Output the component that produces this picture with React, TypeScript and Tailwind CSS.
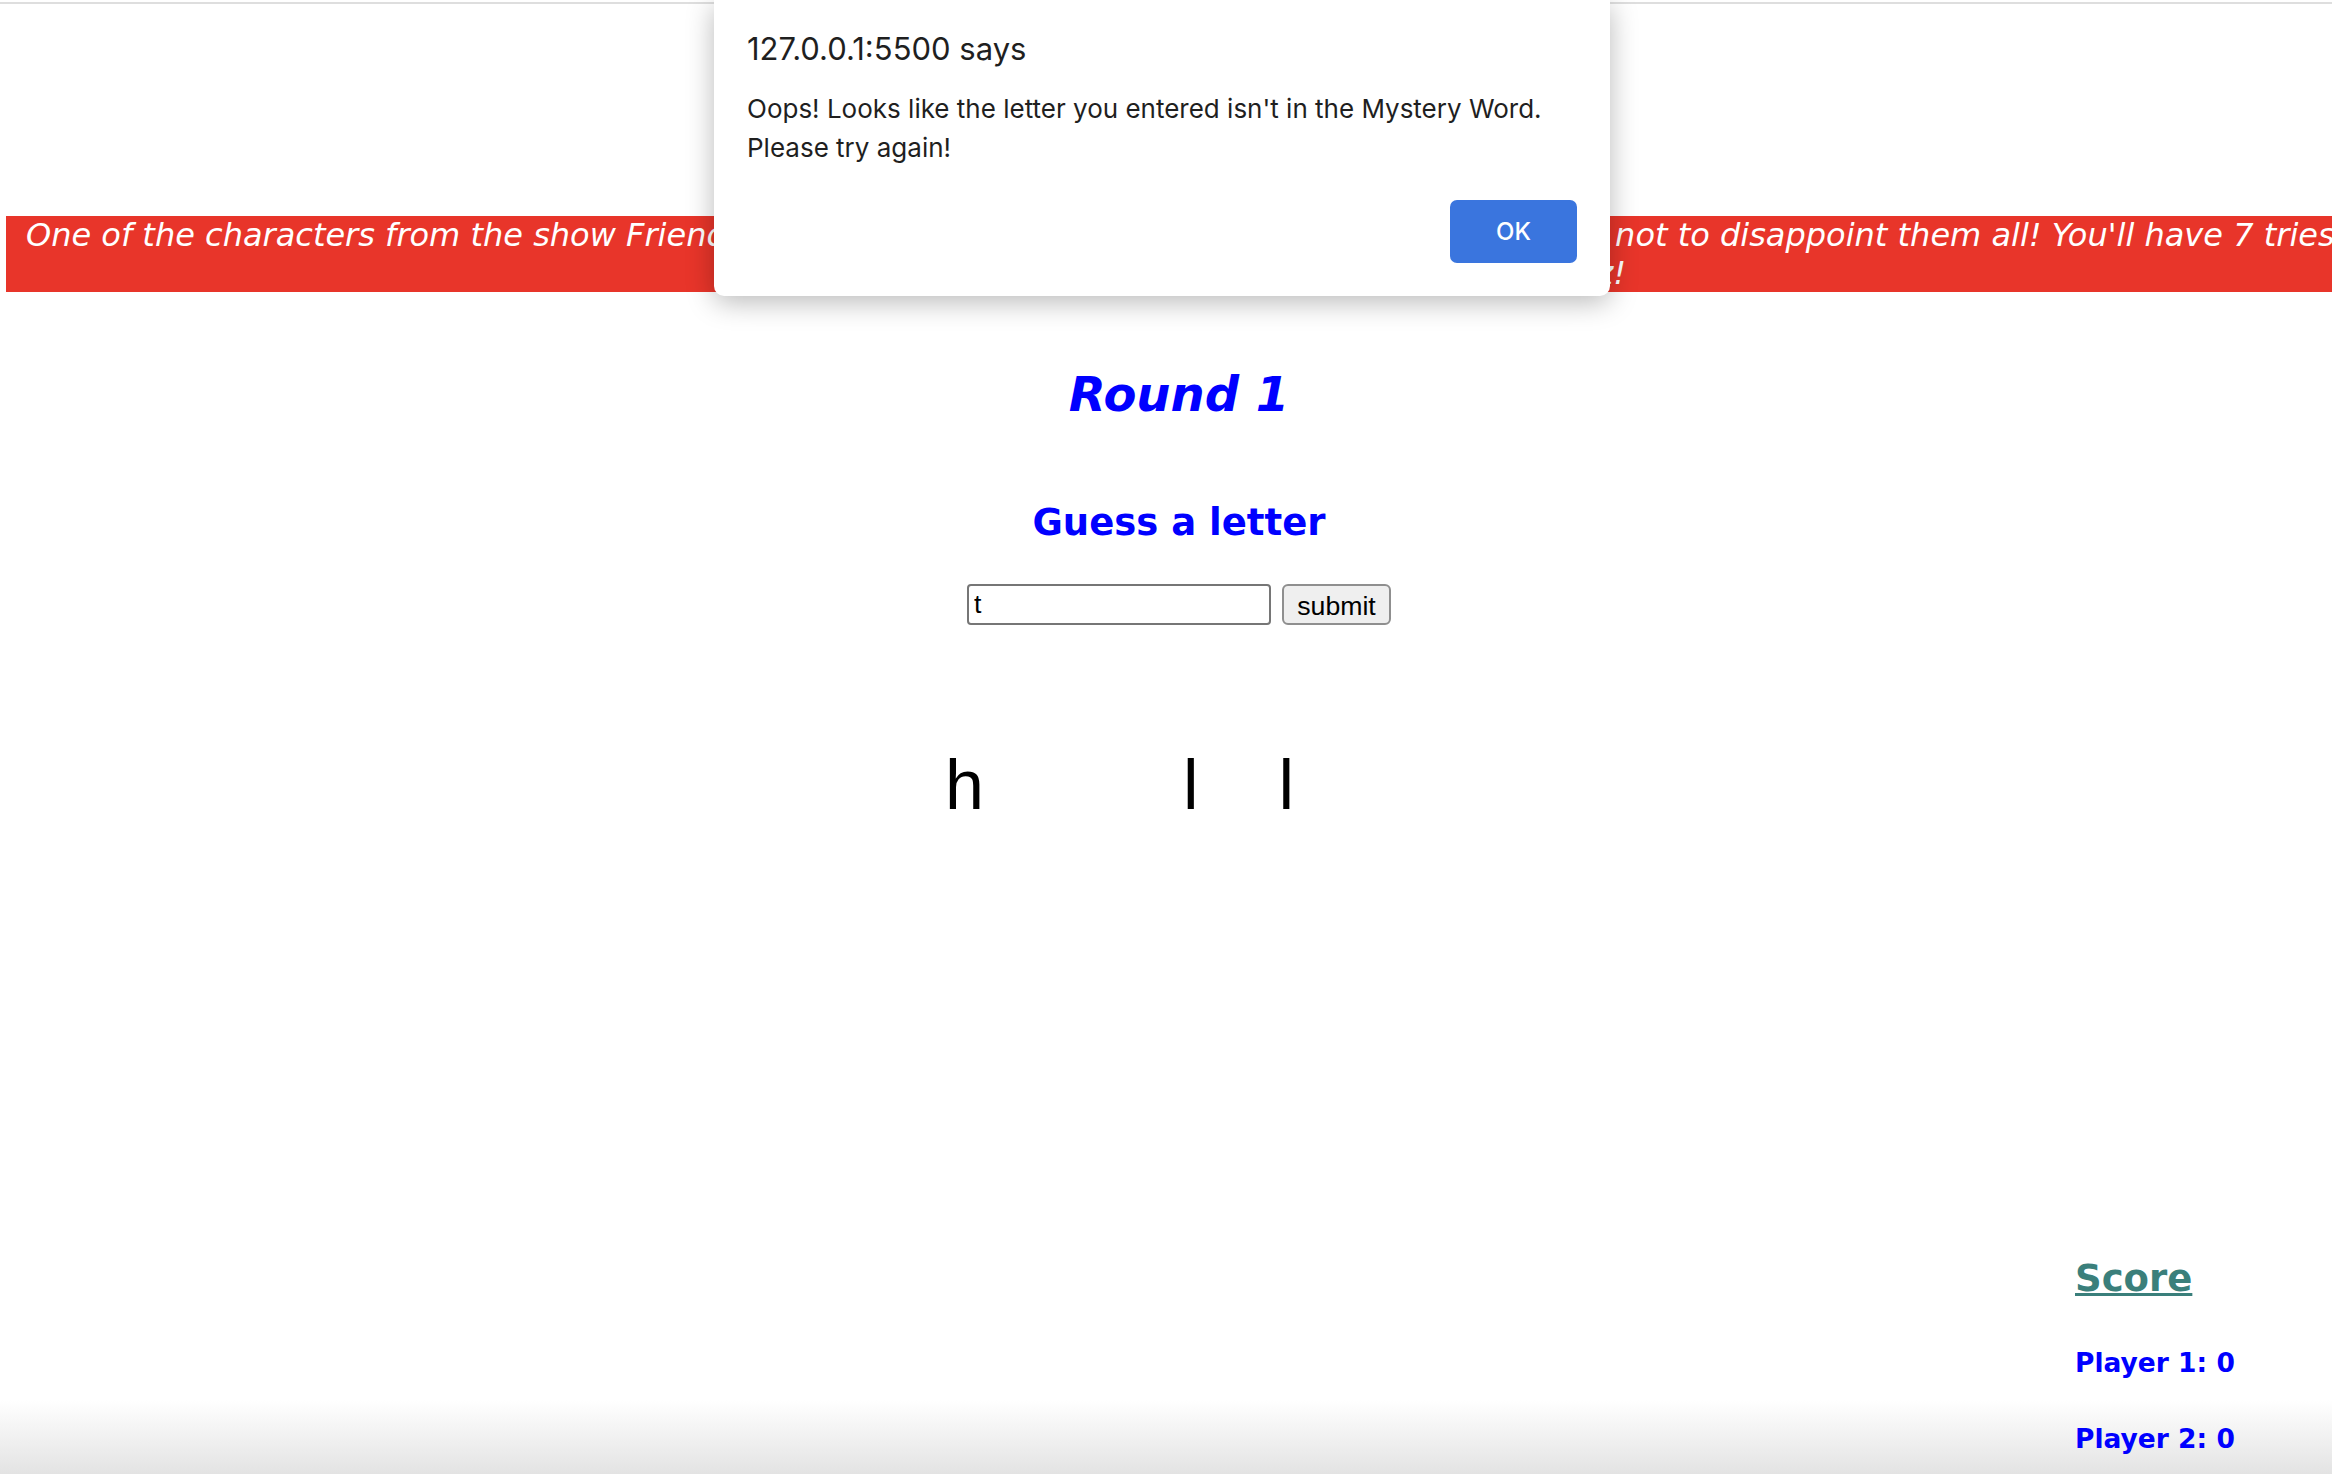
import React from 'react';

const WORD = ['h', 'e', 'l', 'l', 'o'];
const FOUND = ['h', 'l'];

export default function App() {
  return (
    <div className="relative h-screen w-full overflow-hidden bg-[linear-gradient(to_bottom,#ffffff_95%,#e3e3e3)] font-['DejaVu_Sans',Verdana,sans-serif]">
      {/* thin rule at the very top */}
      <div className="pt-[2px]">
        <div className="h-[2px] bg-[#dedede]" />
      </div>

      {/* intro banner */}
      <div className="mt-[212px] ml-[6px] h-[76px] overflow-hidden whitespace-nowrap bg-[#e8352a] pl-[20px] text-[32px] leading-[38px] italic text-white">
        <div>
          One of the characters from the show Friends is the Mystery Word. Your friends count on you so try not to disappoint them all! You'll have 7 tries to guess every letter of the word.
        </div>
        <div className="w-[1600px] text-right">Good luck with the quiz!</div>
      </div>

      {/* game */}
      <div className="flex flex-col items-center pl-[26px]">
        <h2 className="mt-[74px] text-[48px] leading-[56px] font-bold italic text-[#0000ff]">Round 1</h2>
        <h3 className="mt-[79px] text-[37px] leading-[44px] font-bold text-[#0000ff]">Guess a letter</h3>
        <form className="mt-[39px] flex gap-[11px] font-['Liberation_Sans',Arial,sans-serif]" onSubmit={(e) => e.preventDefault()}>
          <input
            type="text"
            defaultValue="t"
            className="h-[41px] w-[304px] rounded-[4px] border-2 border-[#767676] bg-white px-[5px] text-[26.67px] text-black outline-none"
          />
          <button
            type="submit"
            className="h-[41px] w-[109px] rounded-[6px] border-2 border-[#8f8f8f] bg-[#efefef] text-[26.67px] text-black"
          >
            submit
          </button>
        </form>
        <div className="mt-[120px] flex gap-[80px] font-['Liberation_Sans',Arial,sans-serif] text-[70px] leading-[80px] text-black">
          {WORD.map((letter, i) => (
            <span key={i} className={FOUND.includes(letter) ? '' : 'text-transparent'}>
              {letter}
            </span>
          ))}
        </div>
      </div>

      {/* score */}
      <div className="mt-[432px] flex justify-end">
        <div className="w-[257px]">
          <h3 className="text-[37px] leading-[44px] font-bold text-[#3a7f7b] underline decoration-[3px] underline-offset-[2px]">
            Score
          </h3>
          <h5 className="mt-[46px] text-[26.5px] leading-[31px] font-bold text-[#0000ff]">Player 1: 0</h5>
          <h5 className="mt-[45px] text-[26.5px] leading-[31px] font-bold text-[#0000ff]">Player 2: 0</h5>
        </div>
      </div>

      {/* browser alert */}
      <div className="absolute top-0 left-[714px] w-[896px] rounded-b-[10px] bg-white px-[33px] pt-[29px] pb-[33px] font-['Inter',sans-serif] text-[#1f1f1f] shadow-[0_6px_28px_rgba(0,0,0,0.28)]">
        <div className="text-[31px] leading-[40px]">127.0.0.1:5500 says</div>
        <div className="mt-[20px] text-[26px] leading-[39px]">
          Oops! Looks like the letter you entered isn't in the Mystery Word.
          <br />
          Please try again!
        </div>
        <div className="mt-[33px] flex justify-end">
          <button className="h-[63px] w-[127px] rounded-[7px] bg-[#3a75de] text-[24px] font-medium text-white">OK</button>
        </div>
      </div>
    </div>
  );
}
